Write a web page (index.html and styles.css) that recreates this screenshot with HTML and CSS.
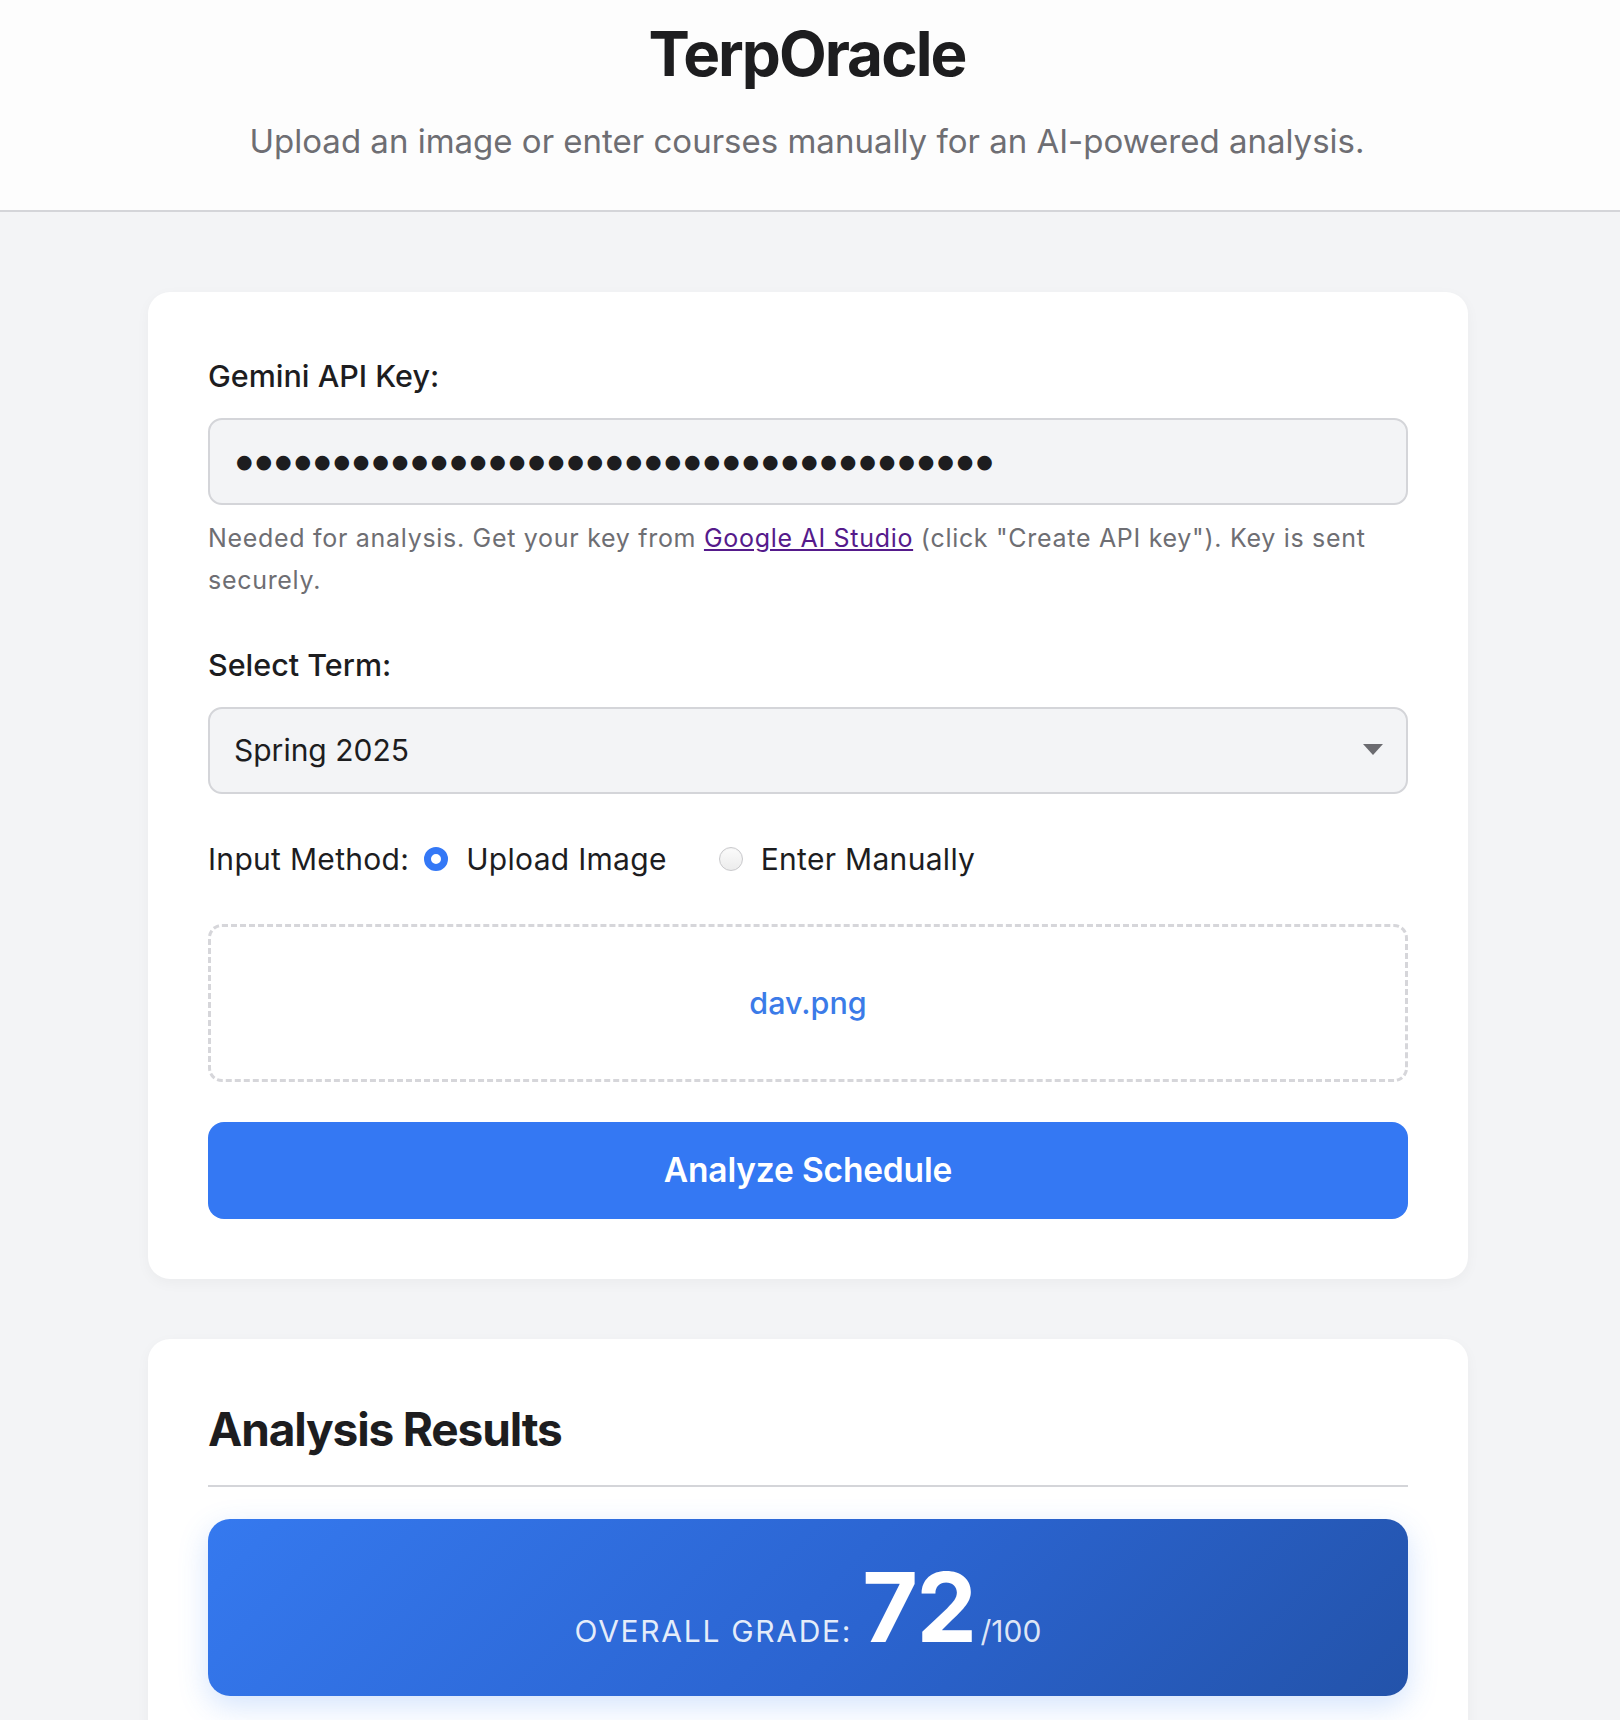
FILE: index.html
```html
<!DOCTYPE html>
<html lang="en">
<head>
<meta charset="utf-8">
<title>TerpOracle</title>
<link rel="stylesheet" href="styles.css">
</head>
<body>
<header class="site-header">
  <h1 class="site-title">TerpOracle</h1>
  <p class="site-subtitle">Upload an image or enter courses manually for an AI-powered analysis.</p>
</header>
<main class="main">
  <section class="card">
    <div class="form-group">
      <label class="field-label" for="apiKey">Gemini API Key:</label>
      <input class="text-input key-input" id="apiKey" type="text" readonly aria-label="Gemini API Key (hidden)" value="&#9679;&#9679;&#9679;&#9679;&#9679;&#9679;&#9679;&#9679;&#9679;&#9679;
&#9679;&#9679;&#9679;&#9679;&#9679;&#9679;&#9679;&#9679;&#9679;&#9679;
&#9679;&#9679;&#9679;&#9679;&#9679;&#9679;&#9679;&#9679;&#9679;&#9679;
&#9679;&#9679;&#9679;&#9679;&#9679;&#9679;&#9679;&#9679;&#9679;">
      <p class="helper">Needed for analysis. Get your key from <a class="helper-link" href="#">Google AI Studio</a> (click "Create API key"). Key is sent securely.</p>
    </div>
    <div class="form-group term-group">
      <label class="field-label" for="term">Select Term:</label>
      <div class="select-wrap">
        <select class="select-input" id="term">
          <option>Spring 2025</option>
          <option>Fall 2024</option>
        </select>
      </div>
    </div>
    <div class="method-row">
      <span class="method-label">Input Method:</span>
      <label class="radio-option"><input class="radio" type="radio" name="method" checked><span>Upload Image</span></label>
      <label class="radio-option"><input class="radio" type="radio" name="method"><span>Enter Manually</span></label>
    </div>
    <div class="dropzone">
      <span class="file-name">dav.png</span>
    </div>
    <button class="analyze-btn" type="button">Analyze Schedule</button>
  </section>
  <section class="card results">
    <h2 class="results-title">Analysis Results</h2>
    <div class="grade-box">
      <span class="grade-label">Overall Grade:</span>
      <span class="grade-value">72</span>
      <span class="grade-max">/100</span>
    </div>
  </section>
</main>
</body>
</html>
```
FILE: styles.css
```css
* { box-sizing: border-box; }
html, body { margin: 0; padding: 0; }
body {
  background: #f3f4f6;
  font-family: Inter, "Noto Sans", "Liberation Sans", sans-serif;
  color: #1d1d1f;
  min-height: 1720px;
}
.site-header {
  background: #fdfdfd;
  border-bottom: 2px solid #d4d5d9;
  padding: 15px 23px 43px 17px;
  text-align: center;
}
.site-title {
  margin: 0;
  font-size: 62px;
  line-height: 77px;
  font-weight: 700;
  letter-spacing: -0.032em;
  color: #1d1d1f;
}
.site-subtitle {
  margin: 25px 0 0;
  font-size: 33px;
  line-height: 1.5;
  color: #6e6e73;
  letter-spacing: 0;
}
.main {
  padding: 80px 22px 0 18px;
}
.card {
  max-width: 1320px;
  margin: 0 auto 60px;
  background: #fff;
  border-radius: 22px;
  padding: 60px;
  box-shadow: 0 4px 14px rgba(0, 0, 0, 0.04);
}
.form-group { margin-bottom: 40px; }
.term-group { margin-bottom: 41px; }
.field-label {
  display: block;
  font-size: 30.5px;
  line-height: 48px;
  font-weight: 500;
  color: #1d1d1f;
  margin-bottom: 18px;
}
.text-input, .select-input {
  display: block;
  width: 100%;
  height: 87px;
  border: 2px solid #d4d5d9;
  border-radius: 14px;
  background: #f3f4f6;
  padding: 0 24px;
  font-family: inherit;
  font-size: 30px;
  color: #1d1d1f;
  outline: none;
}
.key-input {
  font-family: "DejaVu Sans", sans-serif;
  font-size: 19px;
  letter-spacing: 2.9px;
  padding-left: 26px;
  color: #1d1d1f;
}
.helper {
  margin: 12px 0 0;
  font-size: 25px;
  line-height: 42px;
  letter-spacing: 0.7px;
  color: #6e6e73;
}
.helper-link { color: #551a8b; text-decoration: underline; }
.select-wrap { position: relative; }
.select-input {
  -webkit-appearance: none;
  appearance: none;
}
.select-wrap::after {
  content: "";
  position: absolute;
  right: 25px;
  top: 50%;
  margin-top: -6px;
  border-left: 10px solid transparent;
  border-right: 10px solid transparent;
  border-top: 11px solid #6b6b70;
  pointer-events: none;
}
.method-row {
  display: flex;
  align-items: center;
  font-size: 30px;
  letter-spacing: 0.3px;
  line-height: 48px;
  margin-bottom: 41px;
}
.method-label { margin-right: 15px; }
.radio-option {
  display: inline-flex;
  align-items: center;
  gap: 18px;
  margin-right: 52px;
}
.radio {
  -webkit-appearance: none;
  appearance: none;
  margin: 0;
  width: 24px;
  height: 24px;
  border-radius: 50%;
  border: 1px solid #c9c9cc;
  background: linear-gradient(#fbfbfb, #ececec);
  box-shadow: inset 0 1px 1px rgba(0,0,0,0.04);
}
.radio:checked {
  border: 7px solid #3478f6;
  background: #fff;
  box-shadow: none;
}
.dropzone {
  border: 3px dashed #d6d6da;
  border-radius: 14px;
  padding: 51px 20px;
  text-align: center;
  margin-bottom: 40px;
}
.file-name {
  font-size: 30.5px;
  line-height: 50px;
  font-weight: 500;
  color: #3b7be8;
}
.analyze-btn {
  display: block;
  width: 100%;
  height: 97px;
  border: none;
  border-radius: 16px;
  background: #3478f3;
  color: #fff;
  font-family: inherit;
  font-size: 33.5px;
  font-weight: 600;
  letter-spacing: -0.005em;
  cursor: pointer;
}
.results-title {
  margin: 0;
  padding-top: 3px;
  font-size: 46px;
  line-height: 1.2;
  font-weight: 700;
  letter-spacing: -0.025em;
  color: #1d1d1f;
  padding-bottom: 28px;
  border-bottom: 2px solid #d4d5d9;
  margin-bottom: 32px;
}
.grade-box {
  display: flex;
  justify-content: center;
  align-items: baseline;
  padding: 40px 20px 41px;
  border-radius: 22px;
  background: linear-gradient(135deg, #3579ef 0%, #2b64d0 55%, #2353aa 100%);
  box-shadow: 0 10px 30px rgba(59, 130, 246, 0.22);
  color: #fff;
}
.grade-label {
  font-size: 30px;
  text-transform: uppercase;
  letter-spacing: 1.7px;
  color: rgba(255, 255, 255, 0.88);
  margin-right: 10px;
}
.grade-value {
  font-size: 96px;
  line-height: 1;
  font-weight: 700;
  letter-spacing: -0.015em;
  margin-right: 5px;
}
.grade-max {
  font-size: 30px;
  color: rgba(255, 255, 255, 0.85);
}
```
